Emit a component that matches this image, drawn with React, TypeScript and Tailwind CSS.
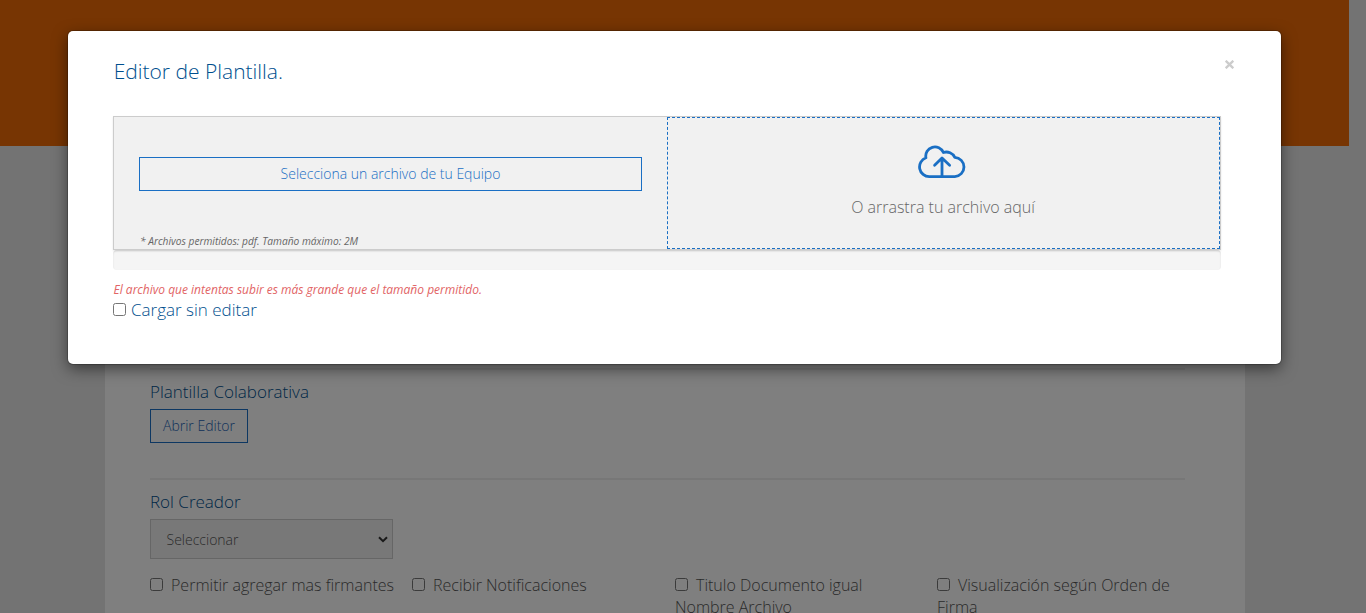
import React from "react";

function Check({ className = "" }: { className?: string }) {
  return (
    <input
      type="checkbox"
      className={`m-0 inline-block h-[13px] w-[13px] align-baseline ${className}`}
    />
  );
}

function CloudUpload() {
  return (
    <svg width="48" height="34" viewBox="0 0 48 34" fill="none" stroke="#1a6fc4" strokeWidth="2.8" strokeLinecap="round" strokeLinejoin="round">
      <path d="M11.4 31.6 A9.7 9.7 0 0 1 7.9 12.8 A9.2 9.2 0 0 1 25.4 7.5 A9.3 9.3 0 0 1 36.8 12.4 A9.61 9.61 0 0 1 36.8 31.6 Z" />
      <path d="M24 31 V13.2 M16.6 20.2 L24 13 L31.6 20.2" />
    </svg>
  );
}

function Option({ label, className }: { label: string; className: string }) {
  return (
    <label className={`block text-[16px] leading-[22px] ${className}`}>
      <Check className="mr-[8px]" />
      {label}
    </label>
  );
}

function FormPage() {
  return (
    <div className="h-full bg-[#e6e6e6]">
      <div className="mr-[17px] h-[146px] bg-[#ee6a06]" />
      <main className="ml-[105px] h-[467px] w-[1140px] bg-white px-[45px] pt-[222px] text-[#555]">
        <div className="h-[2px] w-[1035px] bg-[#eee]" />
        <section className="h-[108px] pt-[11px]">
          <h2 className="text-[17px] leading-[22px] text-[#004f8e]">Plantilla Colaborativa</h2>
          <button className="mt-[6px] block h-[34px] w-[98px] border border-[#1a6fc4] text-[14px] leading-[20px] text-[#1a5fb4]">
            Abrir Editor
          </button>
        </section>
        <div className="h-[2px] w-[1035px] bg-[#eee]" />
        <section className="pt-[11px]">
          <h2 className="text-[17px] leading-[22px] text-[#004f8e]">Rol Creador</h2>
          <div className="mt-[6px] flex h-[40px] w-[243px] items-center justify-between border border-[#ccc] bg-[#f1f1f1] pr-[4px] pl-[15.5px] text-[14px]">
            <span>Seleccionar</span>
            <svg width="10" height="7" viewBox="0 0 10 7" fill="none" stroke="#333" strokeWidth="2">
              <path d="M1 1.2 L5 5.2 L9 1.2" />
            </svg>
          </div>
        </section>
        <div className="mt-[15px] flex items-start">
          <Option className="w-[262px]" label="Permitir agregar mas firmantes" />
          <Option className="w-[263px]" label="Recibir Notificaciones" />
          <Option className="w-[262px] pr-[30px]" label="Titulo Documento igual Nombre Archivo" />
          <Option className="w-[248px]" label="Visualización según Orden de Firma" />
        </div>
      </main>
    </div>
  );
}

function UploadModal() {
  return (
    <div className="absolute top-[31px] left-[68px] h-[333px] w-[1213px] rounded-[5px] bg-white px-[45px] pt-[28px] shadow-[0_5px_15px_rgba(0,0,0,0.5),0_0_0_1px_rgba(0,0,0,0.2)]">
      <header className="flex h-[57px] items-start justify-between">
        <h1 className="pl-[0.7px] text-[21px] leading-[24px] text-[#004f8e]">Editor de Plantilla.</h1>
        <svg className="mt-px mr-[2px]" width="9" height="9" viewBox="0 0 9 9" stroke="#ccc" strokeWidth="2.3">
          <path d="M0.7 0.7 L8.3 8.3 M8.3 0.7 L0.7 8.3" />
        </svg>
      </header>
      <div className="relative flex h-[134px] w-[1108px] border border-[#ccc] bg-[#f1f1f1] text-[#666] shadow-[0_1px_2px_rgba(0,0,0,0.1)]">
        <div className="w-[553px] px-[25px] pt-[40px]">
          <button className="block h-[34px] w-[503px] border border-[#1a6fc4] text-[14px] leading-[20px] text-[#1a6fc4]">
            Selecciona un archivo de tu Equipo
          </button>
          <p className="mt-[43px] pl-px text-[10.2px] leading-[15px] font-normal italic">* Archivos permitidos: pdf. Tamaño máximo: 2M</p>
        </div>
        <div className="flex w-[553px] flex-col items-center border border-dashed border-[#1a6fc4] pt-[27px]">
          <div className="-ml-[3px]">
            <CloudUpload />
          </div>
          <p className="mt-[17px] -ml-px text-[16px] leading-[22px]">O arrastra tu archivo aquí</p>
        </div>
      </div>
      <div className="h-[20px] w-[1108px] rounded-[4px] bg-[#f5f5f5] shadow-[inset_0_1px_2px_rgba(0,0,0,0.1)]" />
      <p className="mt-[11px] pl-[0.5px] text-[12px] leading-[17px] font-normal text-[#e26465] italic">
        El archivo que intentas subir es más grande que el tamaño permitido.
      </p>
      <label className="block text-[17px] leading-[23px] text-[#004f8e]">
        <Check className="mr-[5px]" />
        Cargar sin editar
      </label>
    </div>
  );
}

export default function App() {
  return (
    <div className="relative h-[613px] w-[1366px] overflow-hidden font-['Open_Sans',sans-serif] font-light">
      <FormPage />
      <div className="absolute inset-0 bg-black/50" />
      <UploadModal />
    </div>
  );
}
